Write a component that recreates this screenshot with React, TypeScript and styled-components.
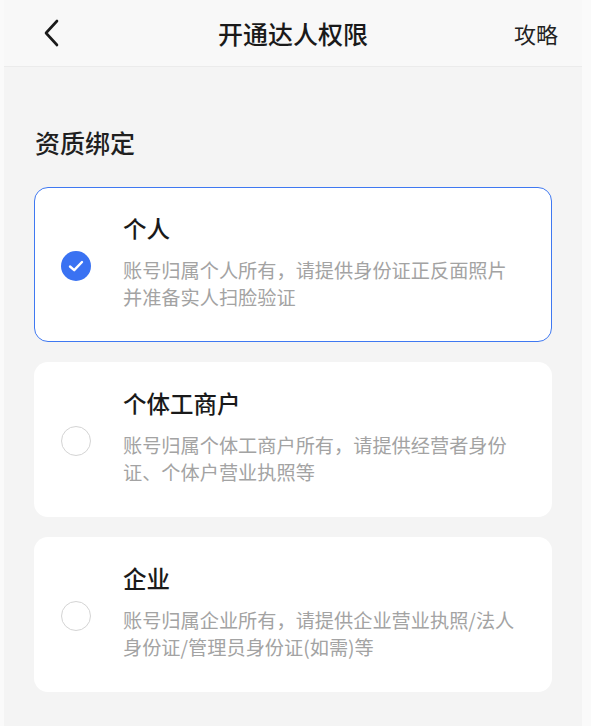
import styled, { createGlobalStyle } from "styled-components";

const GlobalStyle = createGlobalStyle`
  html, body {
    margin: 0;
    padding: 0;
    background: #fafafa;
    font-family: "Noto Sans CJK SC", "Noto Sans", sans-serif;
  }
  * { box-sizing: border-box; }
`;

const Frame = styled.div`
  margin: 0 9px 0 4px;
  min-height: 726px;
  background: #f4f4f4;
`;

const Header = styled.header`
  height: 67px;
  display: grid;
  grid-template-columns: 1fr auto 1fr;
  align-items: center;
  background: #f8f8f8;
  border-bottom: 1px solid #ebebeb;
  padding: 0 24px;
`;

const BackButton = styled.button`
  justify-self: start;
  margin-left: 10px;
  border: 0;
  background: none;
  padding: 0;
  width: 28px;
  height: 32px;
  display: flex;
  align-items: center;
  justify-content: center;
  cursor: pointer;
`;

const Title = styled.h1`
  margin: 0;
  font-size: 25px;
  font-weight: 500;
  color: #1a1a1a;
`;

const HeaderLink = styled.span`
  justify-self: end;
  font-size: 22px;
  color: #222;
`;

const Content = styled.main`
  padding: 57px 30px 30px 30px;
`;

const SectionTitle = styled.h2`
  margin: 0 0 27px 1px;
  font-size: 25px;
  line-height: 36px;
  font-weight: 500;
  color: #1f1f1f;
`;

const Options = styled.ul`
  list-style: none;
  margin: 0;
  padding: 0;
  display: flex;
  flex-direction: column;
  gap: 20px;
`;

const Card = styled.li<{ $active: boolean }>`
  height: 155px;
  display: flex;
  align-items: flex-start;
  padding: 24px 20px 0 26px;
  background: #fff;
  border-radius: 14px;
  border: 1.5px solid ${(p) => (p.$active ? "#3f78f1" : "transparent")};
  cursor: pointer;
`;

const Radio = styled.span<{ $checked: boolean }>`
  flex: none;
  width: 30px;
  height: 30px;
  margin-top: 39px;
  margin-right: 32px;
  border-radius: 50%;
  display: flex;
  align-items: center;
  justify-content: center;
  background: ${(p) => (p.$checked ? "#3a72f2" : "#fff")};
  border: ${(p) => (p.$checked ? "none" : "1.5px solid #d4d4d4")};
`;

const Body = styled.div`
  display: flex;
  flex-direction: column;
  gap: 13px;
  white-space: nowrap;
`;

const OptionTitle = styled.div`
  font-size: 23.5px;
  line-height: 32px;
  font-weight: 500;
  color: #1a1a1a;
`;

const OptionDesc = styled.div`
  font-size: 19.2px;
  line-height: 27px;
  color: #a3a3a3;
`;

interface IOption {
  id: string;
  title: string;
  desc: string[];
}

const options: IOption[] = [
  {
    id: "person",
    title: "个人",
    desc: ["账号归属个人所有，请提供身份证正反面照片", "并准备实人扫脸验证"],
  },
  {
    id: "biz",
    title: "个体工商户",
    desc: ["账号归属个体工商户所有，请提供经营者身份", "证、个体户营业执照等"],
  },
  {
    id: "corp",
    title: "企业",
    desc: ["账号归属企业所有，请提供企业营业执照/法人", "身份证/管理员身份证(如需)等"],
  },
];

function App() {
  const selected = "person";
  return (
    <>
      <GlobalStyle />
      <Frame>
        <Header>
          <BackButton aria-label="返回">
            <svg width="20" height="28" viewBox="0 0 20 28">
              <path
                d="M15 2 L4 14 L15 26"
                fill="none"
                stroke="#1a1a1a"
                strokeWidth="2.6"
                strokeLinecap="round"
                strokeLinejoin="round"
              />
            </svg>
          </BackButton>
          <Title>开通达人权限</Title>
          <HeaderLink>攻略</HeaderLink>
        </Header>
        <Content>
          <SectionTitle>资质绑定</SectionTitle>
          <Options>
            {options.map((o) => (
              <Card key={o.id} $active={o.id === selected}>
                <Radio $checked={o.id === selected}>
                  {o.id === selected && (
                    <svg width="18" height="18" viewBox="0 0 18 18">
                      <path
                        d="M3 9.5 L7.2 13.2 L15 5"
                        fill="none"
                        stroke="#fff"
                        strokeWidth="2.4"
                        strokeLinecap="round"
                        strokeLinejoin="round"
                      />
                    </svg>
                  )}
                </Radio>
                <Body>
                  <OptionTitle>{o.title}</OptionTitle>
                  <OptionDesc>
                    {o.desc.map((line) => (
                      <div key={line}>{line}</div>
                    ))}
                  </OptionDesc>
                </Body>
              </Card>
            ))}
          </Options>
        </Content>
      </Frame>
    </>
  );
}

export default App;
